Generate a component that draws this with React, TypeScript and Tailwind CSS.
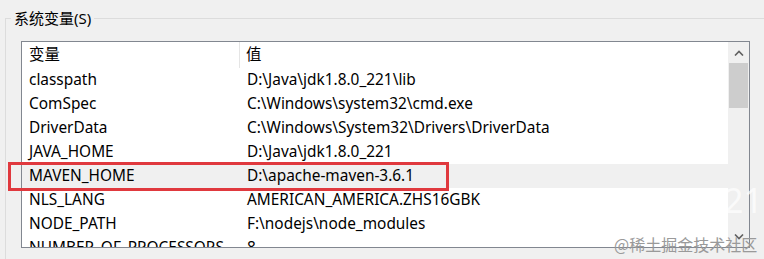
import React from "react";

const rows = [
    { name: "classpath", value: "D:\\Java\\jdk1.8.0_221\\lib" },
    { name: "ComSpec", value: "C:\\Windows\\system32\\cmd.exe" },
    { name: "DriverData", value: "C:\\Windows\\System32\\Drivers\\DriverData" },
    { name: "JAVA_HOME", value: "D:\\Java\\jdk1.8.0_221" },
    { name: "MAVEN_HOME", value: "D:\\apache-maven-3.6.1", selected: true },
    { name: "NLS_LANG", value: "AMERICAN_AMERICA.ZHS16GBK" },
    { name: "NODE_PATH", value: "F:\\nodejs\\node_modules" },
    { name: "NUMBER_OF_PROCESSORS", value: "8" },
];

export default function App() {
    return (
        <div
            className="relative w-[764px] h-[259px] overflow-hidden bg-[#f0f0f0] text-black"
            style={{ fontFamily: '"Noto Sans", "Noto Sans CJK SC", sans-serif' }}
        >
            {/* group box */}
            <div className="absolute left-[5px] top-[18px] w-[800px] h-[300px] border-l border-t border-[#dcdcdc]" />
            <div className="absolute left-[11px] top-[7px] px-[3px] bg-[#f0f0f0] text-[15px] leading-[22px]">
                系统变量(S)
            </div>

            {/* list view */}
            <div className="absolute left-[21px] top-[41px] w-[729px] h-[207px] border border-[#828790] bg-white flex overflow-hidden">
                <div className="flex-1 flex flex-col text-[15.4px]">
                    <div className="flex h-[26px] shrink-0 items-center">
                        <div className="w-[218px] pl-[7px] border-r border-[#e5e5e5] h-full flex items-center">变量</div>
                        <div className="pl-[6px]">值</div>
                    </div>
                    {rows.map((r) => (
                        <div
                            key={r.name}
                            className={`flex h-[24px] shrink-0 items-center ${r.selected ? "bg-[#f0f0f0]" : ""}`}
                        >
                            <div className="w-[219px] pl-[7px] whitespace-nowrap overflow-hidden">{r.name}</div>
                            <div className="pl-[6px] whitespace-nowrap">{r.value}</div>
                        </div>
                    ))}
                </div>

                {/* scrollbar */}
                <div className="w-[21px] shrink-0 bg-[#f0f0f0] flex flex-col">
                    <div className="h-[21px] flex items-center justify-center">
                        <svg width="10" height="6" viewBox="0 0 10 6">
                            <path d="M1 5.5 L5 1.5 L9 5.5" fill="none" stroke="#606060" strokeWidth="1.6" />
                        </svg>
                    </div>
                    <div className="h-[45px] mx-[1px] bg-[#cdcdcd]" />
                    <div className="flex-1" />
                    <div className="h-[21px] flex items-center justify-center">
                        <svg width="10" height="6" viewBox="0 0 10 6">
                            <path d="M1 0.5 L5 4.5 L9 0.5" fill="none" stroke="#606060" strokeWidth="1.6" />
                        </svg>
                    </div>
                </div>
            </div>

            {/* red highlight box */}
            <div className="absolute left-[8px] top-[162px] w-[441px] h-[29px] border-[3px] border-[#e0393e]" />

            {/* watermark */}
            <div className="absolute left-[724px] top-[180px] text-[34px] leading-[40px] text-white/70">21</div>
            <div
                className="absolute left-[614px] top-[234px] text-[16px] leading-[20px] text-[#9a9a9a]"
                style={{ fontFamily: '"Noto Sans CJK SC", serif' }}
            >
                @稀土掘金技术社区
            </div>
        </div>
    );
}
